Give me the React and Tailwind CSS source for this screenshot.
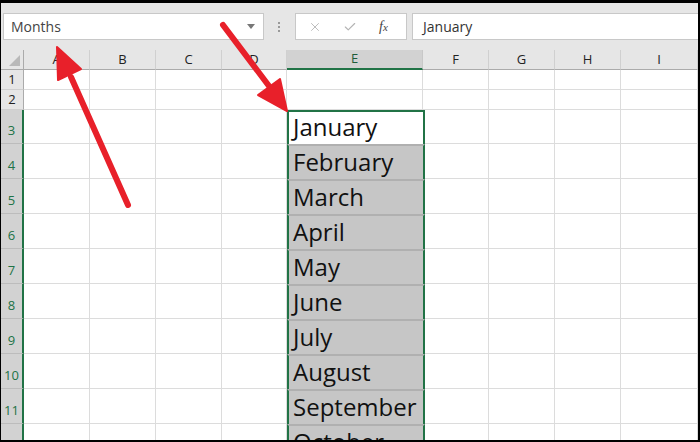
import React from 'react';
import { X, Check } from 'lucide-react';

const columns = [
  { label: 'A' }, { label: 'B' }, { label: 'C' }, { label: 'D' },
  { label: 'E', selected: true }, { label: 'F' }, { label: 'G' }, { label: 'H' }, { label: 'I' },
];

const months = ['January', 'February', 'March', 'April', 'May', 'June', 'July', 'August', 'September', 'October'];

// rows 1..12, rows 3+ hold the month list in column E
const rows = Array.from({ length: 12 }, (_, i) => ({
  n: i + 1,
  month: i >= 2 ? months[i - 2] : null,
}));

const font = { fontFamily: '"Open Sans", "Noto Sans", sans-serif' };

const Toolbar = () => (
  <div className="flex h-[47px] items-start bg-[#e6e6e6] pt-[10px]" style={font}>
    {/* Name box */}
    <div className="ml-[2px] flex h-[27px] w-[261px] items-center justify-between border border-[#c8c8c8] bg-white pl-[7px] pr-[8px]">
      <span className="text-[14px] text-[#444]">Months</span>
      <span className="h-0 w-0 border-x-[4px] border-t-[5px] border-x-transparent border-t-[#777]" />
    </div>
    {/* grip dots */}
    <div className="ml-[14px] mt-[9px] flex flex-col gap-[2px]">
      <span className="h-[2px] w-[2px] bg-[#999]" />
      <span className="h-[2px] w-[2px] bg-[#999]" />
      <span className="h-[2px] w-[2px] bg-[#999]" />
    </div>
    {/* cancel / enter / fx */}
    <div className="ml-[15px] flex h-[27px] w-[112px] items-center border border-[#c8c8c8] bg-white">
      <X className="ml-[12px] h-[14px] w-[14px] text-[#b4b4b4]" strokeWidth={1.5} />
      <Check className="ml-[21px] h-[14px] w-[14px] text-[#b4b4b4]" strokeWidth={2} />
      <span className="ml-[22px] text-[14px] italic text-[#444]" style={{ fontFamily: '"Liberation Serif", serif' }}>
        f<span className="text-[11px]">x</span>
      </span>
    </div>
    {/* formula */}
    <div className="ml-[5px] flex h-[27px] flex-1 items-center border border-r-0 border-[#c8c8c8] bg-white pl-[10px]">
      <span className="text-[14px] text-[#333]">January</span>
    </div>
  </div>
);

const Sheet = () => (
  <div
    className="grid grid-cols-[23px_66px_66px_66px_65px_136px_66px_66px_66px_1fr] grid-rows-[20px_20px_20px_34px_repeat(9,35px)]"
    style={font}
  >
    {/* corner */}
    <div className="relative border-b border-r border-[#ababab] bg-[#e6e6e6]">
      <span className="absolute bottom-[3px] right-[3px] h-0 w-0 border-b-[11px] border-l-[11px] border-b-[#b9b9b9] border-l-transparent" />
    </div>
    {columns.map((c) =>
      c.selected ? (
        <div key={c.label} className="flex items-center justify-center border-b-2 border-r border-b-[#217346] border-r-[#c8c8c8] bg-[#d2d2d2] text-[13px] text-[#1e5c3a]">
          {c.label}
        </div>
      ) : (
        <div key={c.label} className="flex items-center justify-center border-b border-r border-b-[#ababab] border-r-[#d0d0d0] bg-[#e6e6e6] text-[13px] text-[#222]">
          {c.label}
        </div>
      )
    )}

    {rows.map((r) => (
      <React.Fragment key={r.n}>
        {r.month ? (
          <div className="flex items-end justify-center border-b border-r-2 border-b-[#bcbcbc] border-r-[#217346] bg-[#d2d2d2] pb-[6px] text-[13px] leading-none text-[#217346]">
            {r.n}
          </div>
        ) : (
          <div className="flex items-center justify-center border-b border-r border-b-[#cfcfcf] border-r-[#ababab] bg-[#e6e6e6] text-[13px] leading-none text-[#222]">
            {r.n}
          </div>
        )}
        {columns.map((c) => {
          if (c.selected && r.month) {
            // selected range E3:E12, green frame drawn on the cells themselves
            const active = r.n === 3;
            return (
              <div
                key={c.label}
                className={`relative z-10 -mr-[2px] flex items-end border-x-2 border-x-[#217346] pb-[5px] pl-[4px] text-[24px] leading-none text-[#111] ${
                  active ? 'border-t-2 border-t-[#217346] bg-white' : 'border-t-2 border-t-[#b0b0b0] bg-[#c6c6c6]'
                }`}
              >
                {r.month}
              </div>
            );
          }
          return <div key={c.label} className="border-b border-r border-[#dcdcdc] bg-white" />;
        })}
      </React.Fragment>
    ))}
  </div>
);

const Arrows = () => (
  <svg className="pointer-events-none absolute inset-0 z-20 h-full w-full" viewBox="0 0 697 437">
    <g transform="translate(-1,-3)" fill="#e8202a" stroke="#e8202a" strokeLinecap="round" strokeLinejoin="round">
      <line x1="128" y1="205" x2="71" y2="77" strokeWidth="6" />
      <polygon points="57,47 81,69 58,80" strokeWidth="2" />
      <line x1="223" y1="25" x2="272" y2="90" strokeWidth="6" />
      <polygon points="287,111 280,79 258,95" strokeWidth="2" />
    </g>
  </svg>
);

export default function App() {
  return (
    <div className="relative h-[442px] w-[700px] overflow-hidden border-b-2 border-l border-r-2 border-t-[3px] border-black bg-white">
      <Toolbar />
      <Sheet />
      <Arrows />
    </div>
  );
}
